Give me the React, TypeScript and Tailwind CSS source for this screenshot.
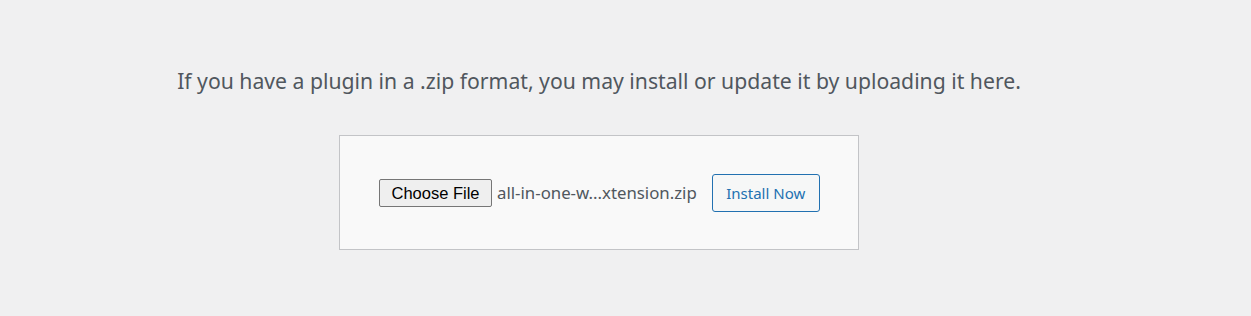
export default function App() {
  return (
    <div className="min-h-[316px] w-full bg-[#f0f0f1] font-['Noto_Sans','Open_Sans',sans-serif] text-[#50575e]">
      <div className="flex w-[1198px] flex-col items-center pt-[65px]">
        <p className="text-[21.2px] leading-[32px]">
          If you have a plugin in a .zip format, you may install or update it by uploading it here.
        </p>
        <form className="mt-[38px] flex w-[520px] items-center border border-[#c3c4c7] bg-[#f9f9f9] pt-[38px] pb-[37px] pl-[39px]">
          <button
            type="button"
            className="h-[28px] rounded-[2px] border border-[#767676] bg-[#efefef] px-[11.5px] font-['Liberation_Sans',Arial,sans-serif] text-[16.5px] leading-none text-black"
          >
            Choose File
          </button>
          <span className="ml-[5px] text-[16.8px] leading-none">all-in-one-w...xtension.zip</span>
          <button
            type="button"
            className="ml-[15px] h-[38px] w-[108px] rounded-[3px] border border-[#2271b1] bg-[#f6f7f7] text-[15px] text-[#2271b1]"
          >
            Install Now
          </button>
        </form>
      </div>
    </div>
  );
}
